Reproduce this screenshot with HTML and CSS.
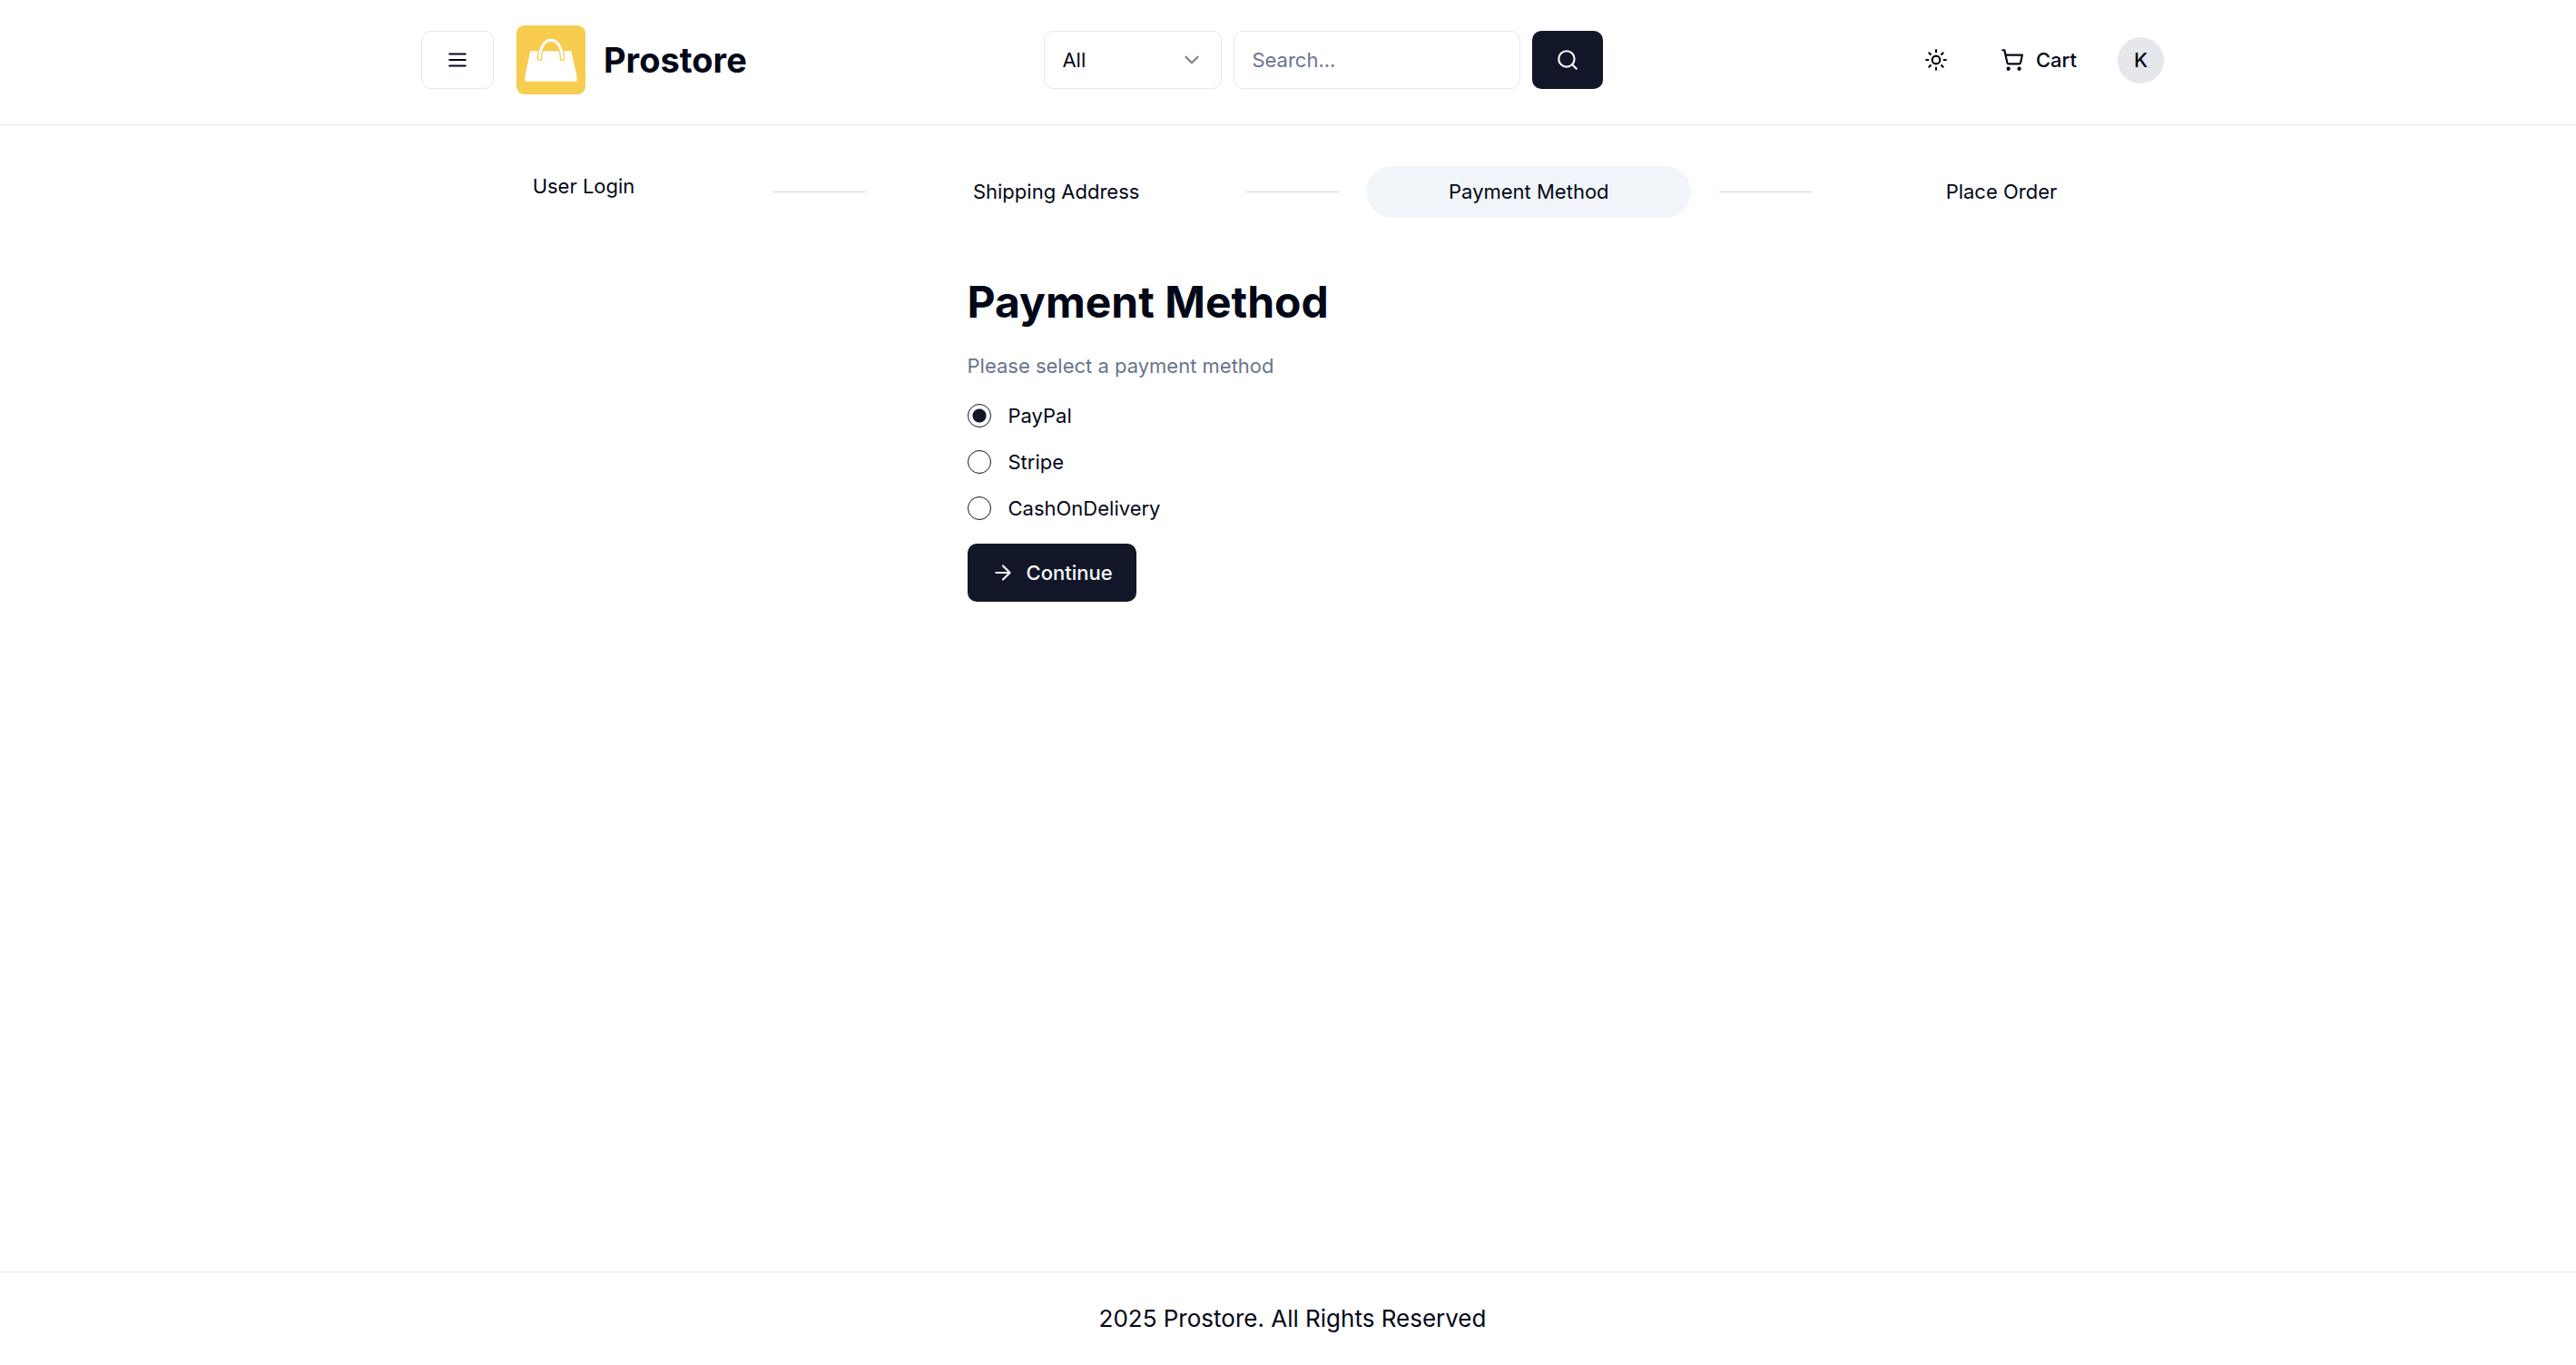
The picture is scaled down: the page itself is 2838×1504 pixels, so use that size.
FILE: index.html
```html
<!DOCTYPE html>
<html lang="en">
<head>
<meta charset="utf-8">
<meta name="viewport" content="width=device-width, initial-scale=1">
<title>Payment Method | Prostore</title>
<link rel="stylesheet" href="styles.css">
</head>
<body>
<header class="site-header">
  <div class="container header-row">
    <div class="brand-group">
      <button class="btn btn-outline" type="button" aria-label="Browse categories">
        <svg class="icon" viewBox="0 0 24 24"><path d="M4 12h16M4 6h16M4 18h16"/></svg>
      </button>
      <a class="brand" href="#">
        <svg class="logo" viewBox="0 0 77 77" aria-hidden="true">
          <rect width="77" height="77" rx="9" fill="#f8cc4f"/>
          <path d="M15.500 28.500H61L67.500 57V62.500H9.500V57Z" fill="#fff"/>
          <path d="M26 37V34C27 23 32 16.500 38.500 16.500S50 23 51 34V37" fill="none" stroke="#f8cc4f" stroke-width="5.500" stroke-linecap="round"/>
          <path d="M26 37V34C27 23 32 16.500 38.500 16.500S50 23 51 34V37" fill="none" stroke="#fff" stroke-width="3" stroke-linecap="round"/>
        </svg>
        <span>Prostore</span>
      </a>
    </div>
    <form class="search">
      <div class="select-wrap">
        <select class="field select" aria-label="Category"><option>All</option></select>
        <svg class="icon select-arrow" viewBox="0 0 24 24"><path d="m6 9 6 6 6-6"/></svg>
      </div>
      <input class="field search-input" type="text" placeholder="Search..." aria-label="Search">
      <button class="btn btn-primary" type="button" aria-label="Search">
        <svg class="icon" viewBox="0 0 24 24"><circle cx="11" cy="11" r="8"/><path d="m21 21-4.300-4.300"/></svg>
      </button>
    </form>
    <nav class="user-nav">
      <button class="btn" type="button" aria-label="Theme">
        <svg class="icon" viewBox="0 0 24 24"><circle cx="12" cy="12" r="4"/><path d="M12 2v2M12 20v2M4.930 4.930l1.410 1.410M17.660 17.660l1.410 1.410M2 12h2M20 12h2M6.340 17.660l-1.410 1.410M19.070 4.930l-1.410 1.410"/></svg>
      </button>
      <a class="btn" href="#">
        <svg class="icon" viewBox="0 0 24 24"><circle cx="8" cy="21" r="1"/><circle cx="19" cy="21" r="1"/><path d="M2.050 2.050h2l2.660 12.420a2 2 0 0 0 2 1.580h9.780a2 2 0 0 0 1.950-1.570l1.650-7.430H5.120"/></svg>
        Cart
      </a>
      <button class="avatar" type="button">K</button>
    </nav>
  </div>
</header>
<main class="main">
  <div class="container">
    <div class="steps">
      <div class="step step-first">User Login</div>
      <hr class="step-line">
      <div class="step">Shipping Address</div>
      <hr class="step-line">
      <div class="step step-active">Payment Method</div>
      <hr class="step-line">
      <div class="step">Place Order</div>
    </div>
    <form class="payment">
      <h1>Payment Method</h1>
      <p class="hint">Please select a payment method</p>
      <div class="options">
        <label class="option"><input type="radio" name="method" checked>PayPal</label>
        <label class="option"><input type="radio" name="method">Stripe</label>
        <label class="option"><input type="radio" name="method">CashOnDelivery</label>
      </div>
      <button class="btn btn-primary" type="button">
        <svg class="icon" viewBox="0 0 24 24"><path d="M5 12h14M12 5l7 7-7 7"/></svg>
        Continue
      </button>
    </form>
  </div>
</main>
<footer class="site-footer">2025 Prostore. All Rights Reserved</footer>
</body>
</html>
```
FILE: styles.css
```css
* { box-sizing: border-box; }

:root {
  --ink: #020817;
  --primary: #111628;
  --muted: #69758a;
  --line: #e5e7eb;
}

body {
  margin: 0;
  min-height: 100vh;
  display: flex;
  flex-direction: column;
  font: 22px/32px Inter, sans-serif;
  color: var(--ink);
  background: #fff;
}

a { color: inherit; text-decoration: none; }
button, input, select { font: inherit; color: inherit; }

.site-header, .main, .site-footer { padding-left: 10px; }

.container {
  max-width: 1984px;
  margin: 0 auto;
  padding: 0 32px;
}

.icon {
  width: 26px;
  height: 26px;
  flex: none;
  fill: none;
  stroke: currentColor;
  stroke-width: 2;
  stroke-linecap: round;
  stroke-linejoin: round;
}

.btn {
  height: 64px;
  padding: 0 26px;
  display: inline-flex;
  align-items: center;
  justify-content: center;
  gap: 13px;
  border: 0;
  border-radius: 10px;
  background: none;
  font-weight: 500;
}
.btn-outline { border: 1px solid var(--line); }
.btn-primary { background: var(--primary); color: #f8fafc; }

.site-header { border-bottom: 1px solid var(--line); }
.header-row {
  padding-top: 28px;
  padding-bottom: 33px;
  display: flex;
  align-items: center;
  justify-content: space-between;
}
.brand-group { display: flex; align-items: center; gap: 25px; }
.brand {
  display: flex;
  align-items: center;
  gap: 20px;
  font-size: 38px;
  font-weight: 700;
}
.logo { width: 76px; height: 76px; }

.search { display: flex; gap: 13px; }
.field {
  height: 64px;
  padding: 0 19px;
  border: 1px solid var(--line);
  border-radius: 10px;
  background: #fff;
}
.select-wrap { position: relative; }
.select { width: 196px; appearance: none; }
.select-arrow {
  position: absolute;
  right: 20px;
  top: 19px;
  opacity: .5;
  pointer-events: none;
}
.search-input { width: 316px; }
.search-input::placeholder { color: var(--muted); }

.user-nav { display: flex; align-items: center; gap: 6px; }
.avatar {
  width: 51px;
  height: 51px;
  margin-left: 13px;
  padding: 0;
  border: 0;
  border-radius: 50%;
  background: var(--line);
  font-weight: 500;
}

.main { flex: 1; }
.steps {
  padding-top: 45px;
  display: flex;
  align-items: center;
  justify-content: space-between;
}
.step {
  width: 358px;
  padding: 12px 13px 13px;
  border-radius: 29px;
  text-align: center;
}
.step-first { padding: 6px 13px 19px; }
.step-active { background: #f1f5f9; }
.step-line { width: 102px; margin: 0; border: 0; border-top: 1px solid #d1d5db; }

.payment { max-width: 717px; margin: 64px auto 0; }
h1 { margin: 0; font-size: 48px; line-height: 58px; font-weight: 700; }
.hint { margin: 25px 0 23px; color: var(--muted); }
.options { display: grid; gap: 19px; margin-bottom: 23px; }
.option { display: flex; align-items: center; gap: 19px; }
.option input {
  appearance: none;
  width: 26px;
  height: 26px;
  margin: 0;
  border: 1px solid var(--primary);
  border-radius: 50%;
}
.option input:checked { background: radial-gradient(circle, var(--primary) 7px, transparent 8px); }

.site-footer {
  padding-top: 32px;
  padding-bottom: 32px;
  border-top: 1px solid var(--line);
  text-align: center;
  font-size: 26px;
  line-height: 38px;
}
```
